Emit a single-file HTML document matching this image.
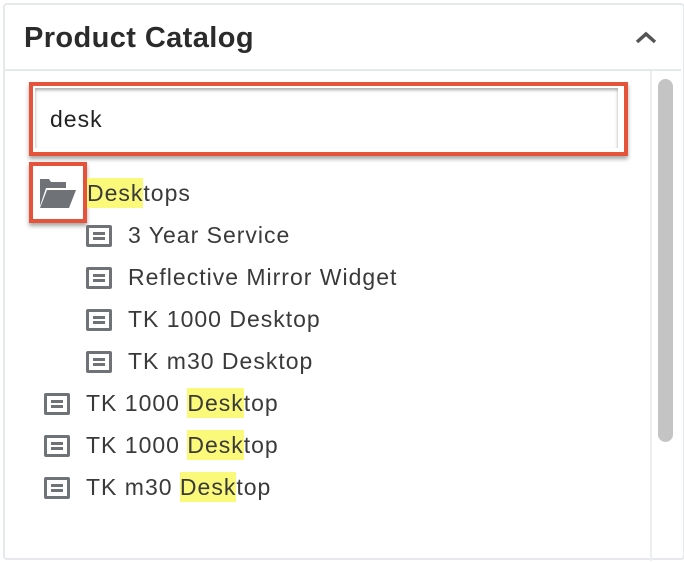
<!DOCTYPE html><html><head><style>
body{margin:0;width:684px;height:562px;background:#fff;font-family:"Liberation Sans",sans-serif;color:#333;position:relative;overflow:hidden}
.a{position:absolute}
.row{position:absolute;font-size:23px;line-height:30px;white-space:nowrap;color:#3a3a3a;letter-spacing:1px}
.ic{position:absolute;width:20px;height:16px;border:3px solid #6f7377;border-radius:2px;box-sizing:content-box}
.ic:before,.ic:after{content:"";position:absolute;left:4px;right:4px;height:3px;background:#6f7377}
.ic:before{top:4px}.ic:after{top:9px}
mark{background:#fbf97a;color:#3a3a3a;padding:2px 0}
</style></head><body>
<div class="a" style="left:3px;top:3px;width:678px;height:553px;border:2px solid #e6e9ec;border-radius:4px"></div>
<div class="a" style="left:5px;top:69px;width:676px;height:2px;background:#e6e9ec"></div>
<div class="a" style="left:24px;top:22px;font-size:29px;font-weight:bold;color:#2b2b2b;letter-spacing:0.4px">Product Catalog</div>
<svg class="a" style="left:634px;top:30px" width="24" height="16"><path d="M3 12 L12 4 L21 12" stroke="#555" stroke-width="3.5" fill="none"/></svg>
<div class="a" style="left:650px;top:71px;width:2px;height:490px;background:#eceef0"></div>
<div class="a" style="left:658px;top:79px;width:15px;height:363px;background:#c4c4c4;border-radius:8px"></div>
<div class="a" style="left:29px;top:82px;width:591px;height:66px;border:4px solid #e4533a;box-shadow:0 3px 4px rgba(0,0,0,.35)"></div>
<div class="a" style="left:35px;top:88px;width:583px;height:60px;box-shadow:inset 0 2px 3px rgba(0,0,0,.35);background:#fff"></div>
<div class="row" style="left:50px;top:104px;color:#222">desk</div>
<div class="a" style="left:29px;top:162px;width:50px;height:53px;border:4px solid #e4533a;box-shadow:0 3px 4px rgba(0,0,0,.35)"></div>
<svg class="a" style="left:38px;top:176px" width="40" height="34"><path d="M2 3 H11 L13 6 H28 V12 H8 L2 30 Z" fill="#6f7377"/><path d="M9 14 H38 L31 32 H2 Z" fill="#6f7377"/></svg>
<div class="row" style="left:87px;top:178px"><mark>Desk</mark>tops</div>
<div class="ic" style="left:86px;top:225px"></div><div class="row" style="left:128px;top:220px">3 Year Service</div>
<div class="ic" style="left:86px;top:267px"></div><div class="row" style="left:128px;top:262px">Reflective Mirror Widget</div>
<div class="ic" style="left:86px;top:309px"></div><div class="row" style="left:128px;top:304px">TK 1000 Desktop</div>
<div class="ic" style="left:86px;top:351px"></div><div class="row" style="left:128px;top:346px">TK m30 Desktop</div>
<div class="ic" style="left:44px;top:393px"></div><div class="row" style="left:86px;top:388px">TK 1000 <mark>Desk</mark>top</div>
<div class="ic" style="left:44px;top:435px"></div><div class="row" style="left:86px;top:430px">TK 1000 <mark>Desk</mark>top</div>
<div class="ic" style="left:44px;top:477px"></div><div class="row" style="left:86px;top:472px">TK m30 <mark>Desk</mark>top</div>
</body></html>
